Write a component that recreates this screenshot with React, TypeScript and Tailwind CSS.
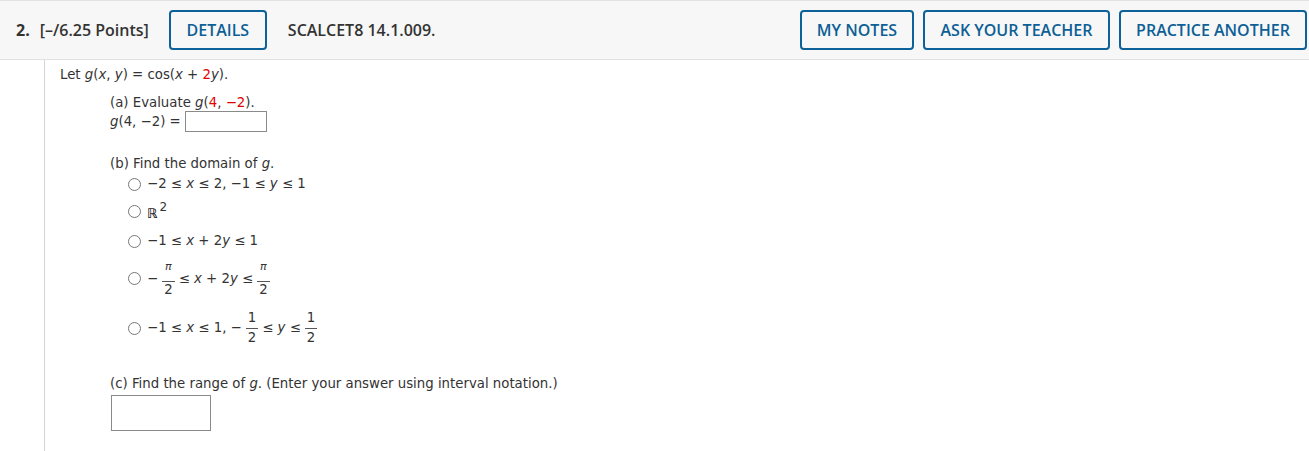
import React from 'react';

const Btn = ({ label, w }: { label: string; w: string }) => (
  <button className={`${w} h-[40px] flex items-center justify-center border-2 border-[#0d6199] rounded-[4px] text-[#0d5f96] text-[16px] font-semibold bg-transparent`}>
    {label}
  </button>
);

const V = ({ children }: { children: React.ReactNode }) => <i className="italic">{children}</i>;
const Red = ({ children }: { children: React.ReactNode }) => <span className="text-[#e00000]">{children}</span>;

// fraction: numerator over a rule over denominator
const Frac = ({ num, den, pi = false }: { num: React.ReactNode; den: React.ReactNode; pi?: boolean }) => (
  <span className="inline-flex flex-col items-center mx-[4px] leading-[14px]">
    <span className={`px-[2px] ${pi ? 'pb-[7px] text-[11px]' : 'pb-[3px]'}`}>{num}</span>
    <span className={`px-[2px] border-t border-[#555] w-full text-center ${pi ? 'pt-[1px]' : 'pt-[2px]'}`}>{den}</span>
  </span>
);

const Radio = ({ children, className = '' }: { children: React.ReactNode; className?: string }) => (
  <div className={`flex items-center ${className}`}>
    <span className="w-[13px] h-[13px] rounded-full border border-[#767676] bg-white mr-[6px] shrink-0" />
    <span className="flex items-center whitespace-pre">{children}</span>
  </div>
);

const App = () => {
  return (
    <div className="w-[1309px] h-[451px] bg-white overflow-hidden">
      {/* HEADER */}
      <header className="h-[60px] bg-[#f7f7f7] border-t border-b border-[#e2e2e2] flex items-center justify-between pl-[16px] pr-[2px] [font-family:'Open_Sans',sans-serif]">
        <div className="flex items-center text-[16px] font-semibold text-[#333]">
          <span className="font-bold">2.</span>
          <span className="ml-[10px]">[–/6.25 Points]</span>
          <div className="ml-[20px]"><Btn label="DETAILS" w="w-[98px]" /></div>
          <span className="ml-[21px]">SCALCET8 14.1.009.</span>
        </div>
        <div className="flex items-center gap-[9px]">
          <Btn label="MY NOTES" w="w-[114px]" />
          <Btn label="ASK YOUR TEACHER" w="w-[187px]" />
          <Btn label="PRACTICE ANOTHER" w="w-[188px]" />
        </div>
      </header>

      {/* CONTENT */}
      <div className="ml-[44px] border-l border-[#d4d4d4] h-[391px] pl-[15px] pt-[7px] [font-family:'DejaVu_Sans',Verdana,sans-serif] text-[13.3px] text-[#333] leading-[16px]">
        <div>
          Let <V>g</V>(<V>x</V>, <V>y</V>) = cos(<V>x</V> + <Red>2</Red><V>y</V>).
        </div>

        <div className="ml-[50px] mt-[12px]">
          (a) Evaluate <V>g</V>(<Red>4</Red>, <Red>−2</Red>).
        </div>
        <div className="ml-[50px] flex items-center">
          <span><V>g</V>(4, −2) =</span>
          <span className="ml-[4px] w-[82px] h-[21px] border border-[#8a8a8a] bg-white" />
        </div>

        <div className="ml-[50px] mt-[24px]">
          (b) Find the domain of <V>g</V>.
        </div>
        <div className="ml-[68px]">
          <Radio className="mt-[4px] h-[16px]">−2 ≤ <V>x</V> ≤ 2, −1 ≤ <V>y</V> ≤ 1</Radio>
          <Radio className="mt-[11px] h-[16px]">
            <span className="font-bold text-[13px] text-[#222] mt-[5px]">ℝ</span>
            <span className="text-[12px] -mt-[9px] ml-[2px]">2</span>
          </Radio>
          <Radio className="mt-[14px] h-[16px]">−1 ≤ <V>x</V> + 2<V>y</V> ≤ 1</Radio>
          <Radio className="mt-[11px]">
            <span>−</span>
            <Frac pi num={<V>π</V>} den="2" />
            <span>≤ <V>x</V> + 2<V>y</V> ≤</span>
            <Frac pi num={<V>π</V>} den="2" />
          </Radio>
          <Radio className="mt-[14px]">
            <span>−1 ≤ <V>x</V> ≤ 1, −</span>
            <Frac num="1" den="2" />
            <span>≤ <V>y</V> ≤</span>
            <Frac num="1" den="2" />
          </Radio>
        </div>

        <div className="ml-[50px] mt-[31px]">
          (c) Find the range of <V>g</V>. (Enter your answer using interval notation.)
        </div>
        <div className="ml-[51px] mt-[3px] w-[100px] h-[36px] border border-[#8a8a8a] bg-white" />
      </div>
    </div>
  );
};

export default App;
